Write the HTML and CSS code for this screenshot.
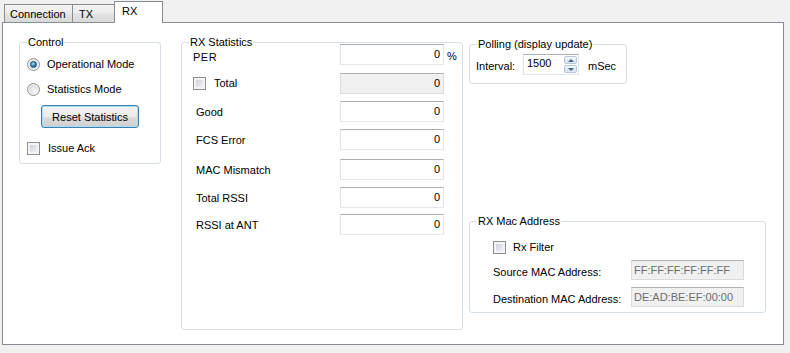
FILE: index.html
```html
<!DOCTYPE html>
<html lang="en">
<head>
  <meta charset="UTF-8" />
  <title>RX</title>
  <link rel="stylesheet" href="styles.css">
</head>
<body>
  <div class="tabs">
    <div class="tab tab-conn">Connection</div>
    <div class="tab tab-tx">TX</div>
    <div class="tab tab-rx active">RX</div>
  </div>

  <div class="panel">
    <fieldset class="group control">
      <legend>Control</legend>
      <div class="control-body">
        <label class="opt opt-first"><span class="radio checked"></span>Operational Mode</label>
        <label class="opt opt-second"><span class="radio"></span>Statistics Mode</label>
        <button class="btn">Reset Statistics</button>
        <label class="opt opt-ack"><span class="check"></span>Issue Ack</label>
      </div>
    </fieldset>

    <fieldset class="group stats">
      <legend>RX Statistics</legend>
      <div class="stats-body">
        <div class="stat-row row-per">
          <span class="stat-label per">PER</span>
          <span class="field">0</span>
          <span class="unit">%</span>
        </div>
        <div class="stat-row row-total">
          <label class="stat-label total"><span class="check"></span>Total</label>
          <span class="field disabled">0</span>
        </div>
        <div class="stat-row">
          <span class="stat-label">Good</span>
          <span class="field">0</span>
        </div>
        <div class="stat-row">
          <span class="stat-label">FCS Error</span>
          <span class="field">0</span>
        </div>
        <div class="stat-row row-mac">
          <span class="stat-label">MAC Mismatch</span>
          <span class="field">0</span>
        </div>
        <div class="stat-row">
          <span class="stat-label">Total RSSI</span>
          <span class="field">0</span>
        </div>
        <div class="stat-row row-ant">
          <span class="stat-label">RSSI at ANT</span>
          <span class="field">0</span>
        </div>
      </div>
    </fieldset>

    <div class="side">
      <fieldset class="group polling">
        <legend>Polling (display update)</legend>
        <div class="poll-row">
          <span class="poll-label">Interval:</span>
          <div class="spin">
            <span class="spin-value">1500</span>
            <span class="spin-btns">
              <span class="spin-btn up"></span>
              <span class="spin-btn down"></span>
            </span>
          </div>
          <span class="poll-unit">mSec</span>
        </div>
      </fieldset>

      <fieldset class="group mac">
        <legend>RX Mac Address</legend>
        <div class="mac-body">
          <label class="opt filter"><span class="check"></span>Rx Filter</label>
          <div class="mac-row">
            <span class="mac-label">Source MAC Address:</span>
            <span class="field disabled mac-field">FF:FF:FF:FF:FF:FF</span>
          </div>
          <div class="mac-row mac-row-dest">
            <span class="mac-label">Destination MAC Address:</span>
            <span class="field disabled mac-field">DE:AD:BE:EF:00:00</span>
          </div>
        </div>
      </fieldset>
    </div>
  </div>
</body>
</html>
```

FILE: styles.css
```css
body {
  margin: 0;
  background: #f0f0f0;
  font-family: 'Liberation Sans', Arial, sans-serif;
  font-size: 11px;
  color: #000;
}

/* tab strip */
.tabs {
  display: flex;
  align-items: flex-end;
  height: 22px;
  padding-left: 4px;
}
.tab {
  box-sizing: border-box;
  height: 18px;
  padding-top: 3px;
  border: 1px solid #898c95;
  border-bottom: none;
  background: linear-gradient(#f3f3f3, #ededed 45%, #e2e2e2 55%, #d9d9d9);
  line-height: 13px;
}
.tab-conn { width: 69px; padding-left: 5px; }
.tab-tx { width: 43px; margin-left: -1px; padding-left: 6px; }
.tab-rx { width: 49px; margin-left: -1px; padding-left: 7px; }
.tab.active {
  position: relative;
  z-index: 1;
  height: 22px;
  margin-bottom: -1px;
  padding-top: 3px;
  background: #fff;
}

/* page body */
.panel {
  box-sizing: border-box;
  display: flex;
  align-items: flex-start;
  width: 782px;
  height: 323px;
  margin-left: 2px;
  padding: 13px 0 0 16px;
  border: 1px solid #898c95;
  background: #fff;
}

.group {
  box-sizing: border-box;
  min-width: 0;
  margin: 0;
  padding: 0;
  border: 1px solid #d5dfe5;
  border-radius: 3px;
}
.group legend {
  margin-left: 7px;
  padding: 0 1px;
  line-height: 13px;
}

.opt {
  display: flex;
  align-items: center;
  height: 16px;
  line-height: 13px;
}

.radio {
  box-sizing: border-box;
  display: flex;
  align-items: center;
  justify-content: center;
  width: 13px;
  height: 13px;
  margin-right: 7px;
  border: 1px solid #8e8f8f;
  border-radius: 50%;
  background: radial-gradient(circle at 65% 65%, #f9f9f9, #cfd2d6 80%);
  box-shadow: inset 0 0 0 1px #f4f4f4;
}
.radio.checked::after {
  content: '';
  width: 5px;
  height: 5px;
  border: 1px solid #1f527c;
  border-radius: 50%;
  background: radial-gradient(circle at 40% 35%, #b4e2fb, #2a78b5 55%, #123c62);
}

.check {
  box-sizing: border-box;
  flex: none;
  width: 13px;
  height: 13px;
  margin-right: 8px;
  border: 1px solid #8e8f8f;
  background: linear-gradient(135deg, #c6cbd1, #e9ebee 70%, #f7f7f7);
  box-shadow: inset 0 0 0 2px #f4f4f4;
}

.btn {
  box-sizing: border-box;
  display: block;
  width: 98px;
  height: 23px;
  padding: 0;
  border: 1px solid #3c7fb1;
  border-radius: 3px;
  background: linear-gradient(#f2f2f2, #ebebeb 50%, #dddddd 50%, #cfcfcf);
  box-shadow: inset 0 0 0 1px #a9dcf6;
  font-family: inherit;
  font-size: 11px;
  color: #000;
}

.field {
  box-sizing: border-box;
  flex: none;
  width: 104px;
  height: 21px;
  padding-right: 3px;
  border: 1px solid;
  border-color: #abadb3 #e2e3ea #e3e9ef #dbdfe6;
  background: #fff;
  line-height: 19px;
  text-align: right;
}
.field.disabled {
  border-color: #adb2b5 #dadada #dadada #dadada;
  background: #f0f0f0;
}

/* Control */
.control {
  width: 142px;
  height: 128px;
}
.control-body {
  padding-left: 7px;
}
.opt-first { margin-top: 7px; }
.opt-second { margin-top: 9px; }
.btn { margin: 8px 0 0 14px; }
.opt-ack { margin-top: 12px; }

/* RX Statistics */
.stats {
  width: 282px;
  height: 294px;
  margin-left: 20px;
}
.stats-body {
  display: flex;
  flex-direction: column;
  gap: 7px;
  padding-left: 14px;
}
.stat-row {
  display: flex;
  align-items: center;
  height: 21px;
}
.row-per { margin-top: -5px; }
.row-total { margin-top: 1px; }
.row-mac { margin-top: 2px; }
.row-ant { margin-top: -1px; }
.stat-label {
  width: 144px;
  padding-top: 2px;
  line-height: 13px;
}
.stat-label.per {
  width: 147px;
  margin-left: -3px;
  padding-top: 6px;
  letter-spacing: 0.5px;
}
.stat-label.total {
  display: flex;
  align-items: center;
  width: 147px;
  margin-left: -3px;
  padding-top: 0;
}
.unit {
  margin-left: 3px;
  padding-top: 3px;
}

/* right column */
.side {
  display: flex;
  flex-direction: column;
  width: 297px;
  margin-left: 6px;
}
.polling {
  width: 158px;
  height: 46px;
  margin-top: 2px;
}
.poll-row {
  display: flex;
  align-items: center;
  margin-top: 3px;
  padding-left: 6px;
}
.poll-label {
  width: 47px;
  padding-top: 2px;
}
.spin {
  box-sizing: border-box;
  display: flex;
  width: 56px;
  height: 21px;
  border: 1px solid;
  border-color: #abadb3 #e2e3ea #e3e9ef #dbdfe6;
  background: #fff;
}
.spin-value {
  flex: 1;
  padding-left: 3px;
  line-height: 17px;
}
.spin-btns {
  display: flex;
  flex-direction: column;
  gap: 1px;
  width: 13px;
  margin: 1px 1px 1px 0;
}
.spin-btn {
  box-sizing: border-box;
  display: flex;
  align-items: center;
  justify-content: center;
  flex: 1;
  border: 1px solid #b7c8da;
  border-radius: 2px;
  background: linear-gradient(#f4f8fc, #e3ecf5 50%, #d6e3f0 50%, #dfe9f4);
}
.spin-btn::after {
  content: '';
  border-left: 3px solid transparent;
  border-right: 3px solid transparent;
}
.spin-btn.up::after { border-bottom: 3px solid #4d6185; }
.spin-btn.down::after { border-top: 3px solid #4d6185; }
.poll-unit {
  margin-left: 9px;
  padding-top: 2px;
}

/* RX Mac Address */
.mac {
  width: 297px;
  height: 98px;
  margin-top: 131px;
}
.mac-body {
  padding-left: 23px;
}
.opt.filter {
  height: 13px;
  margin-top: 13px;
}
.filter .check { margin-right: 7px; }
.mac-row {
  display: flex;
  align-items: center;
  height: 20px;
  margin-top: 6px;
}
.mac-row-dest { margin-top: 7px; }
.mac-label {
  width: 138px;
  padding-top: 3px;
}
.mac-field {
  width: 113px;
  height: 20px;
  padding: 0 0 0 2px;
  color: #6d6d6d;
  line-height: 18px;
  text-align: left;
}
```
